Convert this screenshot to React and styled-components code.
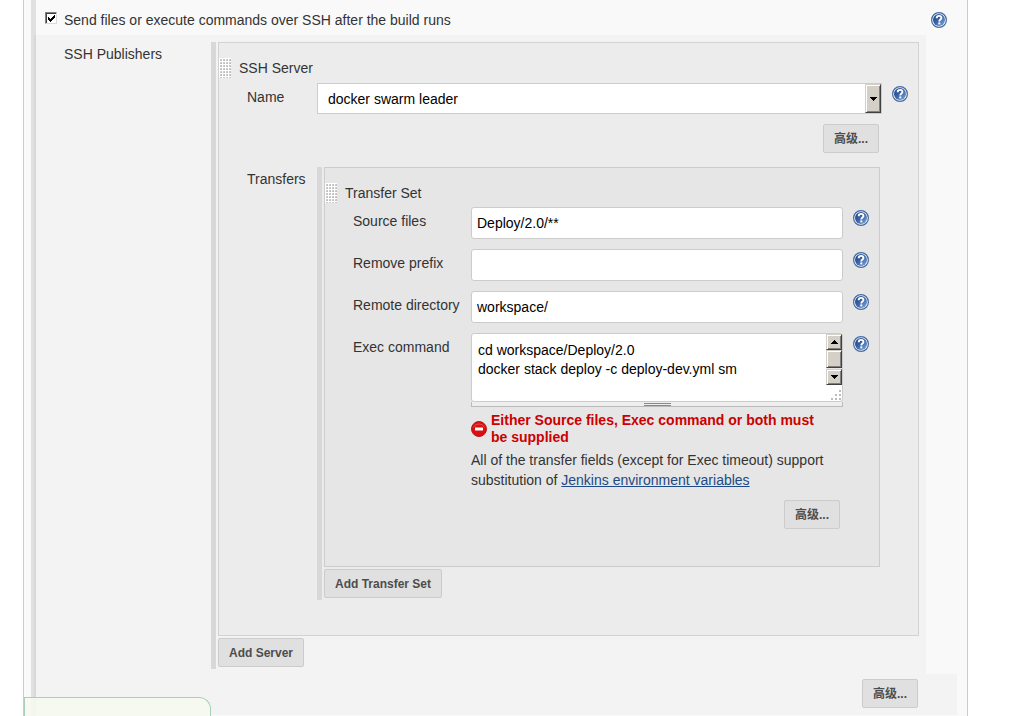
import React, { useId } from "react";
import styled, { createGlobalStyle } from "styled-components";

const GlobalStyle = createGlobalStyle`
  *,
  *::before,
  *::after {
    box-sizing: border-box;
  }

  body {
    margin: 0;
    background: #fff;
    color: #333;
    font-family: "Liberation Sans", Arial, "Noto Sans CJK SC", sans-serif;
    font-size: 14px;
    line-height: 20px;
  }
`;

const transferFields = [
  { id: "source-files", label: "Source files", value: "Deploy/2.0/**" },
  { id: "remove-prefix", label: "Remove prefix", value: "" },
  { id: "remote-directory", label: "Remote directory", value: "workspace/" },
];

const HelpIcon = () => {
  const id = useId();
  return (
    <svg width="16" height="16" viewBox="0 0 16 16" aria-hidden="true">
      <defs>
        <linearGradient id={id} x1="0" y1="0" x2="1" y2="1">
          <stop offset="0" stopColor="#1c4587" />
          <stop offset="0.45" stopColor="#3561a5" />
          <stop offset="1" stopColor="#86a9d6" />
        </linearGradient>
      </defs>
      <circle cx="8" cy="8" r="7.4" fill="#f1f5fb" stroke="#45699f" strokeWidth="1.2" />
      <circle cx="8" cy="8" r="6" fill={`url(#${id})`} />
      <path
        d="M5.7 6.2c0-1.5 1-2.3 2.4-2.3s2.3.8 2.3 2c0 1.6-2.1 1.7-2.1 3.5"
        fill="none"
        stroke="#fff"
        strokeWidth="1.9"
      />
      <rect x="7.3" y="10.4" width="2" height="2" fill="#fff" />
    </svg>
  );
};

const ErrorIcon = () => (
  <svg width="16" height="16" viewBox="0 0 16 16" aria-hidden="true">
    <circle cx="8" cy="8" r="7.5" fill="#dc0f12" stroke="#b5191c" />
    <path d="M2.5 6.5a6 6 0 0 1 11 0" fill="none" stroke="#ec5a5a" strokeWidth="0.8" />
    <rect x="4" y="6.5" width="8" height="3" rx="0.5" fill="#fff" />
  </svg>
);

const Arrow = ({ up }) => (
  <svg width="7" height="4" viewBox="0 0 7 4" shapeRendering="crispEdges" aria-hidden="true">
    <path d={up ? "M3 0h1v1h1v1h1v1h1v1H0V3h1V2h1V1h1z" : "M0 0h7v1H6v1H5v1H4v1H3V3H2V2H1V1H0z"} />
  </svg>
);

const Help = ({ label }) => (
  <HelpButton type="button" aria-label={`Help for ${label}`}>
    <HelpIcon />
  </HelpButton>
);

const App = () => {
  return (
    <>
      <GlobalStyle />
      <Panel>
        <OptionRow>
          <OptionLabel>
            <CheckboxWrap>
              <Checkbox type="checkbox" defaultChecked />
              <Tick width="7" height="7" viewBox="0 0 7 7" shapeRendering="crispEdges" aria-hidden="true">
                <path d="M6 0h1v3H6v1H5v1H4v1H3v1H2V6H1V5H0V2h1v1h1v1h1V3h1V2h1V1h1z" />
              </Tick>
            </CheckboxWrap>
            Send files or execute commands over SSH after the build runs
          </OptionLabel>
          <Help label="SSH publishing" />
        </OptionRow>

        <Publishers>
          <PublishersLabel>SSH Publishers</PublishersLabel>
          <Repeatable>
            <ServerBox>
              <BoxTitle>
                <DragHandle />
                SSH Server
              </BoxTitle>

              <ServerRow>
                <label htmlFor="server-name">Name</label>
                <SelectWrap>
                  <Select id="server-name" defaultValue="leader">
                    <option value="leader">docker swarm leader</option>
                  </Select>
                  <SelectArrow>
                    <Arrow />
                  </SelectArrow>
                </SelectWrap>
                <Help label="Name" />
              </ServerRow>
              <ServerActions>
                <Button type="button">高级...</Button>
              </ServerActions>

              <TransfersRow>
                <TransfersLabel>Transfers</TransfersLabel>
                <Repeatable>
                  <TransferBox>
                    <BoxTitle>
                      <DragHandle />
                      Transfer Set
                    </BoxTitle>

                    <Fields>
                      {transferFields.map((field) => (
                        <FieldRow key={field.id}>
                          <label htmlFor={field.id}>{field.label}</label>
                          <TextInput id={field.id} type="text" defaultValue={field.value} />
                          <Help label={field.label} />
                        </FieldRow>
                      ))}
                      <FieldRow>
                        <label htmlFor="exec-command">Exec command</label>
                        <div>
                          <TextAreaWrap>
                            <TextArea
                              id="exec-command"
                              spellCheck={false}
                              defaultValue={"cd workspace/Deploy/2.0\ndocker stack deploy -c deploy-dev.yml sm"}
                            />
                            <Scrollbar>
                              <ScrollPart>
                                <Arrow up />
                              </ScrollPart>
                              <ScrollPart $thumb />
                              <ScrollPart>
                                <Arrow />
                              </ScrollPart>
                            </Scrollbar>
                            <Grip width="11" height="11" viewBox="0 0 11 11" aria-hidden="true">
                              <path
                                d="M8 0h2v2H8zM4 4h2v2H4zM8 4h2v2H8zM0 8h2v2H0zM4 8h2v2H4zM8 8h2v2H8z"
                                fill="#bbb"
                              />
                            </Grip>
                          </TextAreaWrap>
                          <ResizeBar />
                          <ErrorMessage role="alert">
                            <ErrorIcon />
                            <span>Either Source files, Exec command or both must be supplied</span>
                          </ErrorMessage>
                          <Note>
                            All of the transfer fields (except for Exec timeout) support
                            substitution of <a href="#variables">Jenkins environment variables</a>
                          </Note>
                        </div>
                        <Help label="Exec command" />
                      </FieldRow>
                    </Fields>
                    <TransferActions>
                      <Button type="button">高级...</Button>
                    </TransferActions>
                  </TransferBox>
                  <Button type="button">Add Transfer Set</Button>
                </Repeatable>
              </TransfersRow>
            </ServerBox>
            <Button type="button">Add Server</Button>
          </Repeatable>
        </Publishers>

        <PublisherActions>
          <Button type="button">高级...</Button>
        </PublisherActions>
        <SaveBar />
      </Panel>
    </>
  );
};

const Panel = styled.main`
  min-height: 100vh;
  margin: 0 43px 0 23px;
  padding-left: 7px;
  border: solid #ccc;
  border-width: 0 1px;
  background: linear-gradient(to right, transparent 7px, #e0e0e0 7px, #e0e0e0 12px, transparent 12px) #f9f9f9;
`;

const OptionRow = styled.div`
  display: flex;
  align-items: center;
  justify-content: space-between;
  height: 35px;
  padding: 4px 20px 0 14px;
`;

const OptionLabel = styled.label`
  display: flex;
  align-items: center;
  gap: 7px;
`;

const CheckboxWrap = styled.span`
  position: relative;
  width: 12px;
  height: 12px;
  margin-bottom: 4px;
`;

const Checkbox = styled.input`
  display: block;
  appearance: none;
  width: 12px;
  height: 12px;
  margin: 0;
  border: 1px solid;
  border-color: #808080 #dedad2 #dedad2 #808080;
  background: #fff;
  box-shadow: inset 1px 1px #404040;
`;

const Tick = styled.svg`
  position: absolute;
  top: 3px;
  left: 3px;
  pointer-events: none;

  ${Checkbox}:not(:checked) + & {
    display: none;
  }
`;

const HelpButton = styled.button`
  display: block;
  width: 16px;
  height: 16px;
  padding: 0;
  border: 0;
  background: none;

  svg {
    display: block;
  }
`;

const Publishers = styled.section`
  display: grid;
  grid-template-columns: 175px 1fr;
  margin: 0 41px 0 3px;
  padding: 7px 7px 5px 0;
  border-left: 2px solid #d8d8d8;
  background: #f3f3f3;
`;

const PublishersLabel = styled.div`
  padding: 2px 0 0 28px;
`;

const Repeatable = styled.div`
  min-width: 0;
  padding: 0 0 2px 2px;
  border-left: 5px solid #d8d8d8;
`;

const ServerBox = styled.div`
  margin-bottom: 2px;
  padding: 15px 0 35px;
  border: 1px solid #d2d2d2;
  background: #ececec;
`;

const TransferBox = styled.div`
  margin-bottom: 2px;
  padding: 15px 0 37px;
  border: 1px solid #ccc;
  background: #e6e6e6;
`;

const BoxTitle = styled.div`
  display: flex;
  align-items: center;
  gap: 8px;
  height: 20px;
`;

const DragHandle = styled.span`
  width: 12px;
  height: 20px;
  background:
    linear-gradient(#fff 1px, transparent 1px) 0 0 / 3px 3px,
    linear-gradient(to right, #fff 1px, transparent 1px) 0 0 / 3px 3px,
    linear-gradient(135deg, #ddd, #999) 1px 1px / 3px 3px;
`;

const ServerRow = styled.div`
  display: grid;
  grid-template-columns: 60px 1fr 16px;
  column-gap: 10px;
  margin-top: 5px;
  padding: 0 10px 0 28px;

  label {
    padding-top: 4px;
  }

  ${HelpButton} {
    margin-top: 3px;
  }
`;

const SelectWrap = styled.div`
  position: relative;
`;

const Select = styled.select`
  display: block;
  appearance: none;
  width: 100%;
  height: 31px;
  padding: 0 20px 0 10px;
  border: 1px solid #ccc;
  border-radius: 0;
  background: #fff;
  color: #000;
  font: inherit;
`;

const SelectArrow = styled.span`
  position: absolute;
  top: 1px;
  right: 1px;
  bottom: 1px;
  display: flex;
  align-items: center;
  justify-content: center;
  width: 16px;
  border: 1px solid;
  border-color: #d4d0c8 #404040 #404040 #d4d0c8;
  background: #d4d0c8;
  box-shadow: inset 1px 1px #fff, inset -1px -1px #808080;
  pointer-events: none;
`;

const Button = styled.button`
  display: block;
  height: 29px;
  padding: 0 10px;
  border: 1px solid #ccc;
  border-radius: 2px;
  background: #e0e0e0;
  color: #4d4d4d;
  font: bold 12px/20px "Liberation Sans", Arial, "Noto Sans CJK SC", sans-serif;
`;

const Actions = styled.div`
  display: flex;
  justify-content: flex-end;
`;

const ServerActions = styled(Actions)`
  padding: 10px 39px 14px 0;
`;

const TransferActions = styled(Actions)`
  padding: 10px 39px 0 0;
`;

const PublisherActions = styled(Actions)`
  margin: 0 10px 0 3px;
  padding: 5px 39px 7px 0;
  border-left: 2px solid #d8d8d8;
  background: #f3f3f3;
`;

const TransfersRow = styled.div`
  display: grid;
  grid-template-columns: 98px 1fr;
  padding-right: 38px;
`;

const TransfersLabel = styled.div`
  padding: 2px 0 0 28px;
`;

const Fields = styled.div`
  display: grid;
  row-gap: 10px;
  margin-top: 4px;
`;

const FieldRow = styled.div`
  display: grid;
  grid-template-columns: 108px 1fr 16px;
  column-gap: 10px;
  padding: 0 10px 0 28px;

  label {
    padding-top: 4px;
    white-space: nowrap;
  }

  ${HelpButton} {
    margin-top: 3px;
  }
`;

const TextInput = styled.input`
  width: 100%;
  height: 32px;
  padding: 0 5px;
  border: 1px solid #ccc;
  border-radius: 3px;
  background: #fff;
  color: #000;
  font: inherit;
`;

const TextAreaWrap = styled.div`
  position: relative;
`;

const TextArea = styled.textarea`
  display: block;
  width: 100%;
  height: 69px;
  padding: 7px 20px 0 6px;
  border: 1px solid #ccc;
  border-radius: 3px;
  background: #fff;
  color: #000;
  font: inherit;
  line-height: 19px;
  overflow: hidden;
  resize: none;
`;

const Scrollbar = styled.div`
  position: absolute;
  top: 1px;
  right: 1px;
  display: grid;
  grid-template-rows: 16px 19px 16px;
  width: 16px;
  background: #e9e7e3;
`;

const ScrollPart = styled.div`
  display: flex;
  align-items: center;
  justify-content: center;
  margin-bottom: ${({ $thumb }) => ($thumb ? "1px" : "0")};
  border: 1px solid;
  border-color: #d4d0c8 #404040 #404040 #d4d0c8;
  background: #d4d0c8;
  box-shadow: inset 1px 1px #fff, inset -1px -1px #808080;
`;

const Grip = styled.svg`
  position: absolute;
  right: 1px;
  bottom: 1px;
`;

const ResizeBar = styled.div`
  display: flex;
  justify-content: center;
  height: 5px;
  border: solid #bbb;
  border-width: 0 1px 1px;
  background: #eee;

  &::after {
    content: "";
    width: 27px;
    height: 3px;
    margin-top: 1px;
    border: solid #888;
    border-width: 1px 0;
  }
`;

const ErrorMessage = styled.div`
  display: flex;
  align-items: center;
  gap: 4px;
  margin-top: 5px;
  padding-right: 10px;
  color: #c00;
  font-weight: bold;
  line-height: 17px;

  svg {
    flex: none;
  }
`;

const Note = styled.div`
  margin-top: 4px;

  a {
    color: #204a87;
  }
`;

const SaveBar = styled.div`
  position: fixed;
  bottom: 0;
  left: 24px;
  width: 187px;
  height: 19px;
  border: solid #a9cfb9;
  border-width: 1px 1px 0;
  border-top-right-radius: 12px;
  background: rgba(245, 249, 240, 0.9);
`;

export default App;
